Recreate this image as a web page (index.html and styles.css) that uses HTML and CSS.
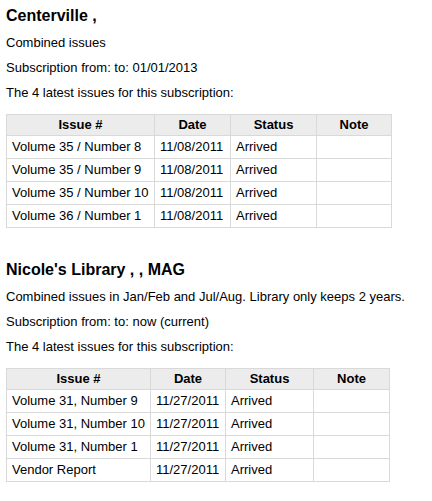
FILE: index.html
```html
<!DOCTYPE html>
<html>
<head>
<meta charset="utf-8">
<link rel="stylesheet" href="styles.css">
</head>
<body>
<div class="sub">
  <h2 class="title">Centerville ,</h2>
  <p class="line">Combined issues</p>
  <p class="line">Subscription from: to: 01/01/2013</p>
  <p class="line">The 4 latest issues for this subscription:</p>
  <table class="issues issues-a">
    <thead>
      <tr>
        <th class="col-issue">Issue #</th>
        <th class="col-date">Date</th>
        <th class="col-status">Status</th>
        <th class="col-note">Note</th>
      </tr>
    </thead>
    <tbody>
      <tr><td>Volume 35 / Number 8</td><td>11/08/2011</td><td>Arrived</td><td></td></tr>
      <tr><td>Volume 35 / Number 9</td><td>11/08/2011</td><td>Arrived</td><td></td></tr>
      <tr><td>Volume 35 / Number 10</td><td>11/08/2011</td><td>Arrived</td><td></td></tr>
      <tr><td>Volume 36 / Number 1</td><td>11/08/2011</td><td>Arrived</td><td></td></tr>
    </tbody>
  </table>
</div>
<div class="sub">
  <h2 class="title">Nicole's Library , , MAG</h2>
  <p class="line">Combined issues in Jan/Feb and Jul/Aug. Library only keeps 2 years.</p>
  <p class="line">Subscription from: to: now (current)</p>
  <p class="line">The 4 latest issues for this subscription:</p>
  <table class="issues issues-b">
    <thead>
      <tr>
        <th class="col-issue">Issue #</th>
        <th class="col-date">Date</th>
        <th class="col-status">Status</th>
        <th class="col-note">Note</th>
      </tr>
    </thead>
    <tbody>
      <tr><td>Volume 31, Number 9</td><td>11/27/2011</td><td>Arrived</td><td></td></tr>
      <tr><td>Volume 31, Number 10</td><td>11/27/2011</td><td>Arrived</td><td></td></tr>
      <tr><td>Volume 31, Number 1</td><td>11/27/2011</td><td>Arrived</td><td></td></tr>
      <tr><td>Vendor Report</td><td>11/27/2011</td><td>Arrived</td><td></td></tr>
    </tbody>
  </table>
</div>
</body>
</html>
```
FILE: styles.css
```css
html, body {
  margin: 0;
  padding: 0;
  background: #fff;
}
body {
  font-family: "Liberation Sans", Arial, Helvetica, sans-serif;
  font-size: 13px;
  color: #000;
  padding: 0 6px;
}
.sub {
  display: block;
}
.sub + .sub {
  margin-top: 32px;
}
.title {
  font-size: 16px;
  font-weight: bold;
  line-height: 20px;
  margin: 6px 0 10px;
}
.sub + .sub .title {
  margin-top: 0;
}
.line {
  font-size: 13px;
  line-height: 14px;
  margin: 11px 0;
}
.title + .line {
  margin-top: 10px;
}
.issues {
  border-collapse: separate;
  border-spacing: 0;
  table-layout: fixed;
  border-top: 1px solid #d9d9d9;
  border-left: 1px solid #d9d9d9;
  margin-top: 14px;
  font-size: 13px;
}
.issues-a {
  width: 386px;
}
.issues-b {
  width: 384px;
}
.issues th,
.issues td {
  box-sizing: border-box;
  border-right: 1px solid #d9d9d9;
  border-bottom: 1px solid #d9d9d9;
  line-height: 14px;
  padding: 4px 5px;
  white-space: nowrap;
  text-align: left;
}
.issues th {
  background: #ececec;
  font-weight: bold;
  text-align: center;
  padding: 3px 5px;
}
.issues-a .col-issue { width: 148px; }
.issues-a .col-date { width: 76px; }
.issues-a .col-status { width: 86px; }
.issues-a .col-note { width: 75px; }
.issues-b .col-issue { width: 144px; }
.issues-b .col-date { width: 75px; }
.issues-b .col-status { width: 88px; }
.issues-b .col-note { width: 76px; }
```
